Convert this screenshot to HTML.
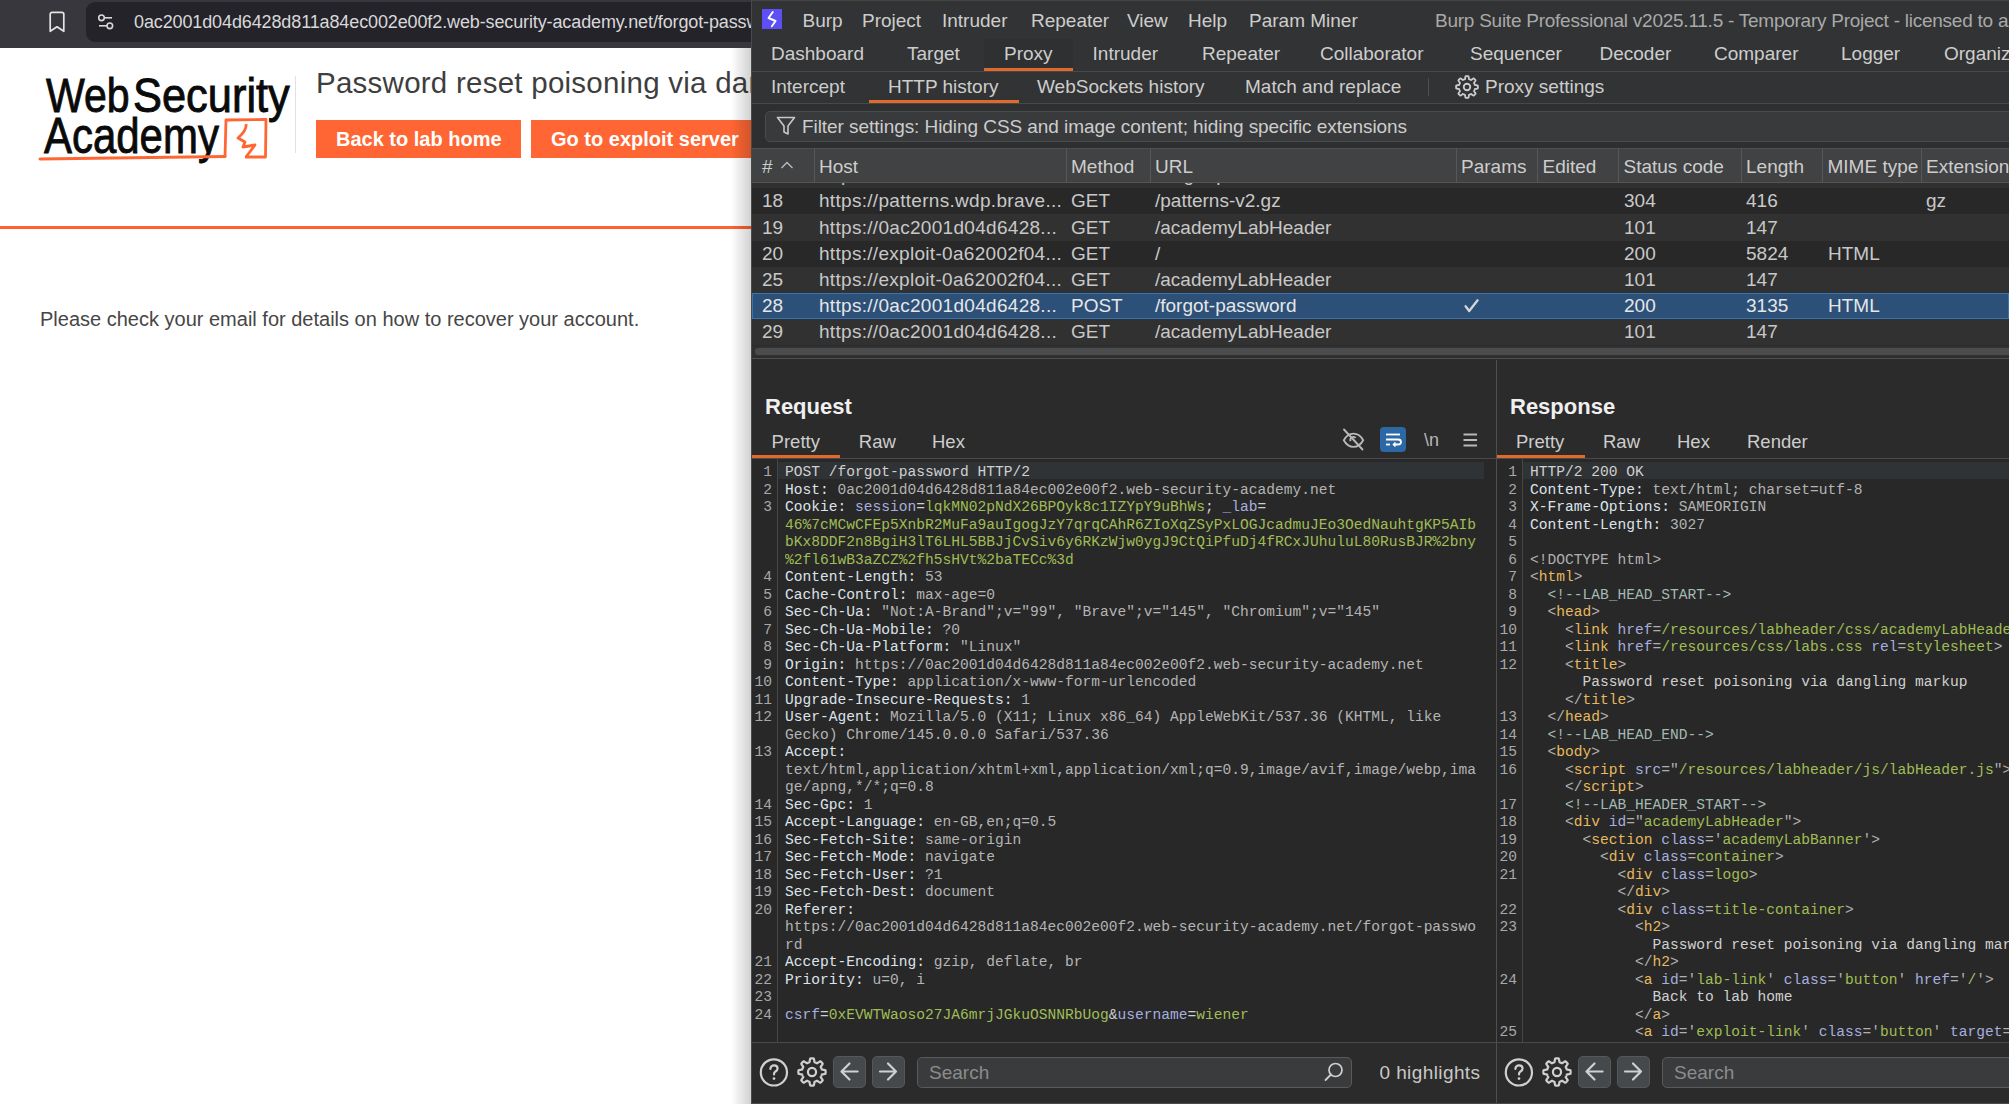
<!DOCTYPE html><html><head><meta charset="utf-8"><style>
*{margin:0;padding:0;box-sizing:border-box}
html,body{width:2009px;height:1104px;overflow:hidden;background:#fff}
body{position:relative;font-family:"Liberation Sans",sans-serif}
.t{position:absolute;white-space:pre;line-height:1.117}
.r{position:absolute}
.code{position:absolute;font-family:"Liberation Mono",monospace;font-size:14.58px;line-height:17.5px;white-space:pre;color:#b4b4b4}
.ln{position:absolute;font-family:"Liberation Mono",monospace;font-size:14.58px;line-height:17.5px;white-space:pre;color:#a8a8a8;text-align:right}
.n{color:#dde3ea}.v{color:#b4b4b4}.k{color:#a6aedf}.g{color:#a0bd55}.tg{color:#e6b95e}.c{color:#a3bab4}.p{color:#b0b0b0}.w{color:#d0d0d0}
</style></head><body>
<div class="r" style="left:0;top:0;width:751px;height:48px;background:#38373d"></div>
<div class="r" style="left:86px;top:2px;width:720px;height:40px;background:#242329;border-radius:9px"></div>
<svg class="r" style="left:47px;top:10px" width="20" height="24" viewBox="0 0 20 24"><path d="M3.2 4.3 Q3.2 2.3 5.2 2.3 H14.8 Q16.8 2.3 16.8 4.3 V21.3 L10 16.8 L3.2 21.3 Z" fill="none" stroke="#e4e4e4" stroke-width="1.7" stroke-linejoin="round"/></svg>
<svg class="r" style="left:96px;top:12px" width="20" height="20" viewBox="0 0 20 20"><circle cx="5.5" cy="5.8" r="2.8" fill="none" stroke="#d8d8d8" stroke-width="1.6"/><path d="M8.5 5.8 H16" stroke="#d8d8d8" stroke-width="1.6"/><circle cx="13.8" cy="13.8" r="2.8" fill="none" stroke="#d8d8d8" stroke-width="1.6"/><path d="M3 13.8 H11" stroke="#d8d8d8" stroke-width="1.6"/></svg>
<div class="t" style="left:134px;top:12.11px;font-size:18px;color:#d8d8da;font-weight:normal;letter-spacing:-0.12px">0ac2001d04d6428d811a84ec002e00f2.web-security-academy.net/forgot-password</div>
<div class="r" style="left:0;top:48px;width:751px;height:1056px;background:#fff;overflow:hidden">
</div>
<div class="t" style="left:45.5px;top:70.5px;font-size:49px;line-height:49px;color:#0a0a0a;transform-origin:0 0;-webkit-text-stroke:0.9px #0a0a0a;transform:scaleX(0.838)">Web</div>
<div class="t" style="left:133px;top:70.5px;font-size:49px;line-height:49px;color:#0a0a0a;transform-origin:0 0;-webkit-text-stroke:0.9px #0a0a0a;transform:scaleX(0.886)">Security</div>
<div class="t" style="left:44px;top:110.5px;font-size:49px;line-height:49px;color:#0a0a0a;transform-origin:0 0;-webkit-text-stroke:0.9px #0a0a0a;font-size:50px;line-height:50px;transform:scaleX(0.839)">Academy</div>
<svg class="r" style="left:36px;top:115px" width="236" height="50" viewBox="36 115 236 50"><path d="M40 159 Q 120 158 225 156.5" fill="none" stroke="#ff6633" stroke-width="3" stroke-linecap="round"/><path d="M225 157 L226 120 L266 119.5 L265.5 157 L245 157" fill="none" stroke="#ff6633" stroke-width="2.8" stroke-linejoin="round"/><path d="M246 124 Q247 130 238 138 L245 142 L243 147 L255 145 L246 157" fill="none" stroke="#ff6633" stroke-width="2.8" stroke-linejoin="round"/></svg>
<div class="r" style="left:295px;top:76px;width:1px;height:77px;background:#e2e2e2"></div>
<div class="t" style="left:316px;top:66.80px;font-size:29.5px;color:#3e3e3e;font-weight:normal;letter-spacing:0.25px">Password reset poisoning via dangling markup</div>
<div class="r" style="left:316px;top:120px;width:205px;height:38px;background:#ff6633"></div>
<div class="t" style="left:336px;top:127.90px;font-size:20px;color:#ffffff;font-weight:bold;">Back to lab home</div>
<div class="r" style="left:531px;top:120px;width:260px;height:38px;background:#ff6633"></div>
<div class="t" style="left:551px;top:127.90px;font-size:20px;color:#ffffff;font-weight:bold;">Go to exploit server</div>
<div class="r" style="left:0;top:225.8px;width:751px;height:3.2px;background:#ff6130"></div>
<div class="t" style="left:40px;top:307.70px;font-size:20px;color:#464646;font-weight:normal;">Please check your email for details on how to recover your account.</div>
<div class="r" style="left:731px;top:48px;width:20px;height:1056px;background:linear-gradient(to right,rgba(0,0,0,0),rgba(0,0,0,0.18))"></div>
<div class="r" style="left:751px;top:0;width:1258px;height:1104px;background:#2b2b2b;overflow:hidden">
<div class="r" style="left:0px;top:0px;width:1px;height:1104px;background:#4a4a4a;"></div>
<div class="r" style="left:1px;top:0px;width:1257px;height:103px;background:#323334;"></div>
<div class="r" style="left:1px;top:0px;width:1257px;height:1px;background:#444;"></div>
<svg class="r" style="left:11px;top:9px" width="20" height="20" viewBox="0 0 20 20"><rect width="20" height="20" fill="#5b4ff5"/><path d="M10.8 3 L6.5 9 L13.6 12 L9.8 17.3" fill="none" stroke="#fff" stroke-width="1.9" stroke-linejoin="round" stroke-linecap="round"/></svg>
<div class="t" style="left:51.5px;top:10.00px;font-size:19px;color:#cdcdcd;font-weight:normal;">Burp</div>
<div class="t" style="left:111px;top:10.00px;font-size:19px;color:#cdcdcd;font-weight:normal;">Project</div>
<div class="t" style="left:191px;top:10.00px;font-size:19px;color:#cdcdcd;font-weight:normal;">Intruder</div>
<div class="t" style="left:280px;top:10.00px;font-size:19px;color:#cdcdcd;font-weight:normal;">Repeater</div>
<div class="t" style="left:376px;top:10.00px;font-size:19px;color:#cdcdcd;font-weight:normal;">View</div>
<div class="t" style="left:437px;top:10.00px;font-size:19px;color:#cdcdcd;font-weight:normal;">Help</div>
<div class="t" style="left:498px;top:10.00px;font-size:19px;color:#cdcdcd;font-weight:normal;">Param Miner</div>
<div class="t" style="left:684px;top:10.00px;font-size:19px;color:#a9a9a9;font-weight:normal;letter-spacing:-0.25px">Burp Suite Professional v2025.11.5 - Temporary Project - licensed to a</div>
<div class="r" style="left:233px;top:39px;width:89px;height:32px;background:#2f3031;"></div>
<div class="r" style="left:233px;top:68px;width:89px;height:3px;background:#e06a2c;"></div>
<div class="r" style="left:1px;top:71px;width:1257px;height:1px;background:#474849;"></div>
<div class="t" style="left:20px;top:43.30px;font-size:19px;color:#cdcdcd;font-weight:normal;">Dashboard</div>
<div class="t" style="left:156px;top:43.30px;font-size:19px;color:#cdcdcd;font-weight:normal;">Target</div>
<div class="t" style="left:253px;top:43.30px;font-size:19px;color:#cdcdcd;font-weight:normal;">Proxy</div>
<div class="t" style="left:341.5999999999999px;top:43.30px;font-size:19px;color:#cdcdcd;font-weight:normal;">Intruder</div>
<div class="t" style="left:451px;top:43.30px;font-size:19px;color:#cdcdcd;font-weight:normal;">Repeater</div>
<div class="t" style="left:569px;top:43.30px;font-size:19px;color:#cdcdcd;font-weight:normal;">Collaborator</div>
<div class="t" style="left:719px;top:43.30px;font-size:19px;color:#cdcdcd;font-weight:normal;">Sequencer</div>
<div class="t" style="left:848.5px;top:43.30px;font-size:19px;color:#cdcdcd;font-weight:normal;">Decoder</div>
<div class="t" style="left:963px;top:43.30px;font-size:19px;color:#cdcdcd;font-weight:normal;">Comparer</div>
<div class="t" style="left:1090px;top:43.30px;font-size:19px;color:#cdcdcd;font-weight:normal;">Logger</div>
<div class="t" style="left:1193px;top:43.30px;font-size:19px;color:#cdcdcd;font-weight:normal;">Organizer</div>
<div class="r" style="left:118px;top:100px;width:150px;height:3px;background:#e06a2c;"></div>
<div class="r" style="left:1px;top:103px;width:1257px;height:1px;background:#474849;"></div>
<div class="t" style="left:20px;top:76.31px;font-size:19px;color:#cdcdcd;font-weight:normal;">Intercept</div>
<div class="t" style="left:137px;top:76.31px;font-size:19px;color:#cdcdcd;font-weight:normal;">HTTP history</div>
<div class="t" style="left:286px;top:76.31px;font-size:19px;color:#cdcdcd;font-weight:normal;">WebSockets history</div>
<div class="t" style="left:494px;top:76.31px;font-size:19px;color:#cdcdcd;font-weight:normal;">Match and replace</div>
<div class="t" style="left:734px;top:76.31px;font-size:19px;color:#cdcdcd;font-weight:normal;">Proxy settings</div>
<div class="r" style="left:677px;top:78px;width:1px;height:18px;background:#4e4e4e;"></div>
<svg class="r" style="left:701.5999999999999px;top:72.7px" width="28" height="28" viewBox="0 0 28 28"><path d="M14.00 3.10 L14.29 3.10 L14.57 3.11 L14.86 3.13 L15.14 3.16 L15.41 3.26 L15.62 3.76 L15.76 4.52 L15.84 5.32 L15.93 5.95 L16.09 6.21 L16.29 6.27 L16.49 6.33 L16.69 6.40 L16.89 6.47 L17.09 6.55 L17.28 6.63 L17.47 6.72 L17.66 6.81 L17.85 6.91 L18.03 7.01 L18.32 6.94 L18.83 6.56 L19.46 6.06 L20.09 5.61 L20.59 5.41 L20.86 5.53 L21.08 5.71 L21.29 5.90 L21.50 6.09 L21.71 6.29 L21.91 6.50 L22.10 6.71 L22.29 6.92 L22.47 7.14 L22.59 7.41 L22.39 7.91 L21.94 8.54 L21.44 9.17 L21.06 9.68 L20.99 9.97 L21.09 10.15 L21.19 10.34 L21.28 10.53 L21.37 10.72 L21.45 10.91 L21.53 11.11 L21.60 11.31 L21.67 11.51 L21.73 11.71 L21.79 11.91 L22.05 12.07 L22.68 12.16 L23.48 12.24 L24.24 12.38 L24.74 12.59 L24.84 12.86 L24.87 13.14 L24.89 13.43 L24.90 13.71 L24.90 14.00 L24.90 14.29 L24.89 14.57 L24.87 14.86 L24.84 15.14 L24.74 15.41 L24.24 15.62 L23.48 15.76 L22.68 15.84 L22.05 15.93 L21.79 16.09 L21.73 16.29 L21.67 16.49 L21.60 16.69 L21.53 16.89 L21.45 17.09 L21.37 17.28 L21.28 17.47 L21.19 17.66 L21.09 17.85 L20.99 18.03 L21.06 18.32 L21.44 18.83 L21.94 19.46 L22.39 20.09 L22.59 20.59 L22.47 20.86 L22.29 21.08 L22.10 21.29 L21.91 21.50 L21.71 21.71 L21.50 21.91 L21.29 22.10 L21.08 22.29 L20.86 22.47 L20.59 22.59 L20.09 22.39 L19.46 21.94 L18.83 21.44 L18.32 21.06 L18.03 20.99 L17.85 21.09 L17.66 21.19 L17.47 21.28 L17.28 21.37 L17.09 21.45 L16.89 21.53 L16.69 21.60 L16.49 21.67 L16.29 21.73 L16.09 21.79 L15.93 22.05 L15.84 22.68 L15.76 23.48 L15.62 24.24 L15.41 24.74 L15.14 24.84 L14.86 24.87 L14.57 24.89 L14.29 24.90 L14.00 24.90 L13.71 24.90 L13.43 24.89 L13.14 24.87 L12.86 24.84 L12.59 24.74 L12.38 24.24 L12.24 23.48 L12.16 22.68 L12.07 22.05 L11.91 21.79 L11.71 21.73 L11.51 21.67 L11.31 21.60 L11.11 21.53 L10.91 21.45 L10.72 21.37 L10.53 21.28 L10.34 21.19 L10.15 21.09 L9.97 20.99 L9.68 21.06 L9.17 21.44 L8.54 21.94 L7.91 22.39 L7.41 22.59 L7.14 22.47 L6.92 22.29 L6.71 22.10 L6.50 21.91 L6.29 21.71 L6.09 21.50 L5.90 21.29 L5.71 21.08 L5.53 20.86 L5.41 20.59 L5.61 20.09 L6.06 19.46 L6.56 18.83 L6.94 18.32 L7.01 18.03 L6.91 17.85 L6.81 17.66 L6.72 17.47 L6.63 17.28 L6.55 17.09 L6.47 16.89 L6.40 16.69 L6.33 16.49 L6.27 16.29 L6.21 16.09 L5.95 15.93 L5.32 15.84 L4.52 15.76 L3.76 15.62 L3.26 15.41 L3.16 15.14 L3.13 14.86 L3.11 14.57 L3.10 14.29 L3.10 14.00 L3.10 13.71 L3.11 13.43 L3.13 13.14 L3.16 12.86 L3.26 12.59 L3.76 12.38 L4.52 12.24 L5.32 12.16 L5.95 12.07 L6.21 11.91 L6.27 11.71 L6.33 11.51 L6.40 11.31 L6.47 11.11 L6.55 10.91 L6.63 10.72 L6.72 10.53 L6.81 10.34 L6.91 10.15 L7.01 9.97 L6.94 9.68 L6.56 9.17 L6.06 8.54 L5.61 7.91 L5.41 7.41 L5.53 7.14 L5.71 6.92 L5.90 6.71 L6.09 6.50 L6.29 6.29 L6.50 6.09 L6.71 5.90 L6.92 5.71 L7.14 5.53 L7.41 5.41 L7.91 5.61 L8.54 6.06 L9.17 6.56 L9.68 6.94 L9.97 7.01 L10.15 6.91 L10.34 6.81 L10.53 6.72 L10.72 6.63 L10.91 6.55 L11.11 6.47 L11.31 6.40 L11.51 6.33 L11.71 6.27 L11.91 6.21 L12.07 5.95 L12.16 5.32 L12.24 4.52 L12.38 3.76 L12.59 3.26 L12.86 3.16 L13.14 3.13 L13.43 3.11 L13.71 3.10 Z" fill="none" stroke="#cdcdcd" stroke-width="1.8" stroke-linejoin="round"/><circle cx="14" cy="14" r="3.27" fill="none" stroke="#cdcdcd" stroke-width="1.8"/></svg>
<div class="r" style="left:1px;top:104px;width:1257px;height:44px;background:#2e2f30;"></div>
<div class="r" style="left:14px;top:111px;width:1300px;height:31px;background:#393a3b;border:1px solid #4a4b4c;border-radius:5px"></div>
<svg class="r" style="left:25px;top:116px" width="20" height="20" viewBox="0 0 20 20"><path d="M1.5 1.5 H18.5 L12 10 V18 L8 16 V10 Z" fill="none" stroke="#c8c8c8" stroke-width="1.6" stroke-linejoin="round"/></svg>
<div class="t" style="left:51px;top:116.31px;font-size:19px;color:#cdcdcd;font-weight:normal;letter-spacing:-0.06px">Filter settings: Hiding CSS and image content; hiding specific extensions</div>
<div class="r" style="left:1px;top:148px;width:1257px;height:35px;background:#414243;"></div>
<div class="r" style="left:1px;top:182px;width:1257px;height:1px;background:#555;"></div>
<div class="r" style="left:1px;top:148px;width:1257px;height:1px;background:#4e4f50;"></div>
<div class="r" style="left:63px;top:148px;width:1px;height:34px;background:#565758;"></div>
<div class="r" style="left:315px;top:148px;width:1px;height:34px;background:#565758;"></div>
<div class="r" style="left:399px;top:148px;width:1px;height:34px;background:#565758;"></div>
<div class="r" style="left:705px;top:148px;width:1px;height:34px;background:#565758;"></div>
<div class="r" style="left:786px;top:148px;width:1px;height:34px;background:#565758;"></div>
<div class="r" style="left:867px;top:148px;width:1px;height:34px;background:#565758;"></div>
<div class="r" style="left:990px;top:148px;width:1px;height:34px;background:#565758;"></div>
<div class="r" style="left:1071px;top:148px;width:1px;height:34px;background:#565758;"></div>
<div class="r" style="left:1170px;top:148px;width:1px;height:34px;background:#565758;"></div>
<div class="t" style="left:11px;top:156.31px;font-size:19px;color:#cdcdcd;font-weight:normal;">#</div>
<svg class="r" style="left:29px;top:160px" width="14" height="10" viewBox="0 0 14 10"><path d="M1.5 8 L7 2.5 L12.5 8" fill="none" stroke="#bdbdbd" stroke-width="1.3"/></svg>
<div class="t" style="left:68px;top:156.31px;font-size:19px;color:#cdcdcd;font-weight:normal;">Host</div>
<div class="t" style="left:320px;top:156.31px;font-size:19px;color:#cdcdcd;font-weight:normal;">Method</div>
<div class="t" style="left:404px;top:156.31px;font-size:19px;color:#cdcdcd;font-weight:normal;">URL</div>
<div class="t" style="left:710px;top:156.31px;font-size:19px;color:#cdcdcd;font-weight:normal;">Params</div>
<div class="t" style="left:791.5px;top:156.31px;font-size:19px;color:#cdcdcd;font-weight:normal;">Edited</div>
<div class="t" style="left:872.5px;top:156.31px;font-size:19px;color:#cdcdcd;font-weight:normal;">Status code</div>
<div class="t" style="left:995px;top:156.31px;font-size:19px;color:#cdcdcd;font-weight:normal;">Length</div>
<div class="t" style="left:1076.5px;top:156.31px;font-size:19px;color:#cdcdcd;font-weight:normal;">MIME type</div>
<div class="t" style="left:1175px;top:156.31px;font-size:19px;color:#cdcdcd;font-weight:normal;">Extension</div>
<div class="r" style="left:1px;top:183px;width:1257px;height:5.2px;background:#303030;overflow:hidden">
<div class="t" style="left:11px;top:-18.89px;font-size:19px;color:#c8c8c8;font-weight:normal;">17</div>
<div class="t" style="left:68px;top:-18.89px;font-size:19px;color:#c8c8c8;font-weight:normal;">https://0ac2001d04d6428...</div>
<div class="t" style="left:320px;top:-18.89px;font-size:19px;color:#c8c8c8;font-weight:normal;">GET</div>
<div class="t" style="left:404px;top:-18.89px;font-size:19px;color:#c8c8c8;font-weight:normal;">/forgot-password</div>
<div class="t" style="left:873px;top:-18.89px;font-size:19px;color:#c8c8c8;font-weight:normal;">200</div>
<div class="t" style="left:995px;top:-18.89px;font-size:19px;color:#c8c8c8;font-weight:normal;">3140</div>
<div class="t" style="left:1077px;top:-18.89px;font-size:19px;color:#c8c8c8;font-weight:normal;">HTML</div>
</div>
<div class="r" style="left:1px;top:188.2px;width:1257px;height:26.2px;background:#282828;"></div>
<div class="t" style="left:11px;top:190.31px;font-size:19px;color:#c8c8c8;font-weight:normal;">18</div>
<div class="t" style="left:68px;top:190.31px;font-size:19px;color:#c8c8c8;font-weight:normal;letter-spacing:0.3px">https://patterns.wdp.brave...</div>
<div class="t" style="left:320px;top:190.31px;font-size:19px;color:#c8c8c8;font-weight:normal;">GET</div>
<div class="t" style="left:404px;top:190.31px;font-size:19px;color:#c8c8c8;font-weight:normal;">/patterns-v2.gz</div>
<div class="t" style="left:873px;top:190.31px;font-size:19px;color:#c8c8c8;font-weight:normal;">304</div>
<div class="t" style="left:995px;top:190.31px;font-size:19px;color:#c8c8c8;font-weight:normal;">416</div>
<div class="t" style="left:1175px;top:190.31px;font-size:19px;color:#c8c8c8;font-weight:normal;">gz</div>
<div class="r" style="left:1px;top:214.4px;width:1257px;height:26.2px;background:#313131;"></div>
<div class="t" style="left:11px;top:216.50px;font-size:19px;color:#c8c8c8;font-weight:normal;">19</div>
<div class="t" style="left:68px;top:216.50px;font-size:19px;color:#c8c8c8;font-weight:normal;letter-spacing:0.3px">https://0ac2001d04d6428...</div>
<div class="t" style="left:320px;top:216.50px;font-size:19px;color:#c8c8c8;font-weight:normal;">GET</div>
<div class="t" style="left:404px;top:216.50px;font-size:19px;color:#c8c8c8;font-weight:normal;">/academyLabHeader</div>
<div class="t" style="left:873px;top:216.50px;font-size:19px;color:#c8c8c8;font-weight:normal;">101</div>
<div class="t" style="left:995px;top:216.50px;font-size:19px;color:#c8c8c8;font-weight:normal;">147</div>
<div class="r" style="left:1px;top:240.6px;width:1257px;height:26.2px;background:#282828;"></div>
<div class="t" style="left:11px;top:242.70px;font-size:19px;color:#c8c8c8;font-weight:normal;">20</div>
<div class="t" style="left:68px;top:242.70px;font-size:19px;color:#c8c8c8;font-weight:normal;letter-spacing:0.3px">https://exploit-0a62002f04...</div>
<div class="t" style="left:320px;top:242.70px;font-size:19px;color:#c8c8c8;font-weight:normal;">GET</div>
<div class="t" style="left:404px;top:242.70px;font-size:19px;color:#c8c8c8;font-weight:normal;">/</div>
<div class="t" style="left:873px;top:242.70px;font-size:19px;color:#c8c8c8;font-weight:normal;">200</div>
<div class="t" style="left:995px;top:242.70px;font-size:19px;color:#c8c8c8;font-weight:normal;">5824</div>
<div class="t" style="left:1077px;top:242.70px;font-size:19px;color:#c8c8c8;font-weight:normal;">HTML</div>
<div class="r" style="left:1px;top:266.8px;width:1257px;height:26.2px;background:#313131;"></div>
<div class="t" style="left:11px;top:268.90px;font-size:19px;color:#c8c8c8;font-weight:normal;">25</div>
<div class="t" style="left:68px;top:268.90px;font-size:19px;color:#c8c8c8;font-weight:normal;letter-spacing:0.3px">https://exploit-0a62002f04...</div>
<div class="t" style="left:320px;top:268.90px;font-size:19px;color:#c8c8c8;font-weight:normal;">GET</div>
<div class="t" style="left:404px;top:268.90px;font-size:19px;color:#c8c8c8;font-weight:normal;">/academyLabHeader</div>
<div class="t" style="left:873px;top:268.90px;font-size:19px;color:#c8c8c8;font-weight:normal;">101</div>
<div class="t" style="left:995px;top:268.90px;font-size:19px;color:#c8c8c8;font-weight:normal;">147</div>
<div class="r" style="left:1px;top:293.00px;width:1257px;height:26.20px;background:#2c5078;border:1px solid #3873b2"></div>
<div class="t" style="left:11px;top:295.11px;font-size:19px;color:#e6e6e6;font-weight:normal;">28</div>
<div class="t" style="left:68px;top:295.11px;font-size:19px;color:#e6e6e6;font-weight:normal;letter-spacing:0.3px">https://0ac2001d04d6428...</div>
<div class="t" style="left:320px;top:295.11px;font-size:19px;color:#e6e6e6;font-weight:normal;">POST</div>
<div class="t" style="left:404px;top:295.11px;font-size:19px;color:#e6e6e6;font-weight:normal;">/forgot-password</div>
<svg class="r" style="left:711px;top:293.00px" width="20" height="26" viewBox="0 0 20 26"><path d="M3.6 13.2 L7.2 18 L15.6 7.3" fill="none" stroke="#d6d6d6" stroke-width="2.3" stroke-linecap="round" stroke-linejoin="round"/></svg>
<div class="t" style="left:873px;top:295.11px;font-size:19px;color:#e6e6e6;font-weight:normal;">200</div>
<div class="t" style="left:995px;top:295.11px;font-size:19px;color:#e6e6e6;font-weight:normal;">3135</div>
<div class="t" style="left:1077px;top:295.11px;font-size:19px;color:#e6e6e6;font-weight:normal;">HTML</div>
<div class="r" style="left:1px;top:319.2px;width:1257px;height:26.2px;background:#313131;"></div>
<div class="t" style="left:11px;top:321.31px;font-size:19px;color:#c8c8c8;font-weight:normal;">29</div>
<div class="t" style="left:68px;top:321.31px;font-size:19px;color:#c8c8c8;font-weight:normal;letter-spacing:0.3px">https://0ac2001d04d6428...</div>
<div class="t" style="left:320px;top:321.31px;font-size:19px;color:#c8c8c8;font-weight:normal;">GET</div>
<div class="t" style="left:404px;top:321.31px;font-size:19px;color:#c8c8c8;font-weight:normal;">/academyLabHeader</div>
<div class="t" style="left:873px;top:321.31px;font-size:19px;color:#c8c8c8;font-weight:normal;">101</div>
<div class="t" style="left:995px;top:321.31px;font-size:19px;color:#c8c8c8;font-weight:normal;">147</div>
<div class="r" style="left:1px;top:345.6px;width:1257px;height:10px;background:#313131;"></div>
<div class="r" style="left:1px;top:355.6px;width:1257px;height:2.8px;background:#2e2e2e;"></div>
<div class="r" style="left:4px;top:348px;width:1300px;height:7px;background:#4b4c4d;border-radius:4px"></div>
<div class="r" style="left:1px;top:358px;width:1257px;height:1.2px;background:#4f4f4f;"></div>
<div class="r" style="left:745px;top:360px;width:1px;height:744px;background:#4f4f4f;"></div>
<div class="t" style="left:14px;top:394.59px;font-size:22px;color:#f0f0f0;font-weight:bold;">Request</div>
<div class="t" style="left:759px;top:394.59px;font-size:22px;color:#f0f0f0;font-weight:bold;">Response</div>
<div class="t" style="left:20.600000000000023px;top:431.56px;font-size:18.5px;color:#cdcdcd;font-weight:normal;">Pretty</div>
<div class="t" style="left:107.79999999999995px;top:431.56px;font-size:18.5px;color:#cdcdcd;font-weight:normal;">Raw</div>
<div class="t" style="left:181px;top:431.56px;font-size:18.5px;color:#cdcdcd;font-weight:normal;">Hex</div>
<div class="t" style="left:765px;top:431.56px;font-size:18.5px;color:#cdcdcd;font-weight:normal;">Pretty</div>
<div class="t" style="left:852px;top:431.56px;font-size:18.5px;color:#cdcdcd;font-weight:normal;">Raw</div>
<div class="t" style="left:926px;top:431.56px;font-size:18.5px;color:#cdcdcd;font-weight:normal;">Hex</div>
<div class="t" style="left:996px;top:431.56px;font-size:18.5px;color:#cdcdcd;font-weight:normal;">Render</div>
<div class="r" style="left:1px;top:455px;width:88px;height:3px;background:#e06a2c;"></div>
<div class="r" style="left:746px;top:455px;width:88px;height:3px;background:#e06a2c;"></div>
<div class="r" style="left:1px;top:458px;width:744px;height:1px;background:#4a4a4a;"></div>
<div class="r" style="left:746px;top:458px;width:512px;height:1px;background:#4a4a4a;"></div>
<svg class="r" style="left:590px;top:427px" width="25" height="25" viewBox="0 0 25 25"><path d="M2.8 13.2 C5.5 8.2 9 6.6 12.5 6.6 C16 6.6 19.5 8.2 22.2 13.2 C19.5 18.2 16 19.8 12.5 19.8 C9 19.8 5.5 18.2 2.8 13.2 Z" fill="none" stroke="#b8b8b8" stroke-width="1.8"/><path d="M9.6 14.2 A3 3 0 0 1 14.6 11" fill="none" stroke="#b8b8b8" stroke-width="1.8"/><path d="M3 2.5 L21.5 22.5" stroke="#b8b8b8" stroke-width="1.9" stroke-linecap="round"/></svg>
<div class="r" style="left:629px;top:427px;width:26px;height:25px;background:#2c67a6;border-radius:4px"></div>
<svg class="r" style="left:629px;top:427px" width="26" height="25" viewBox="0 0 26 25"><path d="M6 7.5 H20" stroke="#fff" stroke-width="1.8"/><path d="M6 12.5 H18 Q21 12.5 21 15 Q21 17.5 18 17.5 H14" fill="none" stroke="#fff" stroke-width="1.8"/><path d="M15.5 15.5 L13.5 17.5 L15.5 19.5" fill="none" stroke="#fff" stroke-width="1.6"/><path d="M6 17.5 H10" stroke="#fff" stroke-width="1.8"/></svg>
<div class="t" style="left:673px;top:430.21px;font-size:18px;color:#b8b8b8;font-weight:normal;">\n</div>
<svg class="r" style="left:711px;top:433px" width="16" height="14" viewBox="0 0 16 14"><path d="M1.5 1.5 H15 M1.5 7 H15 M1.5 12.5 H15" stroke="#b8b8b8" stroke-width="2"/></svg>
<div class="r" style="left:1px;top:459px;width:744px;height:583px;background:#282828;"></div>
<div class="r" style="left:746px;top:459px;width:512px;height:583px;background:#282828;"></div>
<div class="r" style="left:26px;top:459px;width:1px;height:583px;background:#464646;"></div>
<div class="r" style="left:771px;top:459px;width:1px;height:583px;background:#464646;"></div>
<div class="r" style="left:27px;top:462px;width:706px;height:17.2px;background:#303336;"></div>
<div class="r" style="left:772px;top:462px;width:486px;height:17.2px;background:#303336;"></div>
<div class="r" style="left:1px;top:1042px;width:744px;height:1px;background:#4a4a4a;"></div>
<div class="r" style="left:746px;top:1042px;width:512px;height:1px;background:#4a4a4a;"></div>
<div class="ln" style="left:-39px;top:464px;width:60px">1
2
3



4
5
6
7
8
9
10
11
12

13


14
15
16
17
18
19
20


21
22
23
24</div>
<div class="code" style="left:34px;top:464px;width:700px;height:578px;overflow:hidden"><span class="w">POST /forgot-password HTTP/2</span>
<span class="n">Host:</span><span class="v"> 0ac2001d04d6428d811a84ec002e00f2.web-security-academy.net</span>
<span class="n">Cookie:</span><span class="v"> </span><span class="k">session</span><span class="w">=</span><span class="g">lqkMN02pNdX26BPOyk8c1IZYpY9uBhWs</span><span class="w">;</span><span class="v"> </span><span class="k">_lab</span><span class="w">=</span>
<span class="g">46%7cMCwCFEp5XnbR2MuFa9auIgogJzY7qrqCAhR6ZIoXqZSyPxLOGJcadmuJEo3OedNauhtgKP5AIb</span>
<span class="g">bKx8DDF2n8BgiH3lT6LHL5BBJjCvSiv6y6RKzWjw0ygJ9CtQiPfuDj4fRCxJUhuluL80RusBJR%2bny</span>
<span class="g">%2fl61wB3aZCZ%2fh5sHVt%2baTECc%3d</span>
<span class="n">Content-Length:</span><span class="v"> 53</span>
<span class="n">Cache-Control:</span><span class="v"> max-age=0</span>
<span class="n">Sec-Ch-Ua:</span><span class="v"> &quot;Not:A-Brand&quot;;v=&quot;99&quot;, &quot;Brave&quot;;v=&quot;145&quot;, &quot;Chromium&quot;;v=&quot;145&quot;</span>
<span class="n">Sec-Ch-Ua-Mobile:</span><span class="v"> ?0</span>
<span class="n">Sec-Ch-Ua-Platform:</span><span class="v"> &quot;Linux&quot;</span>
<span class="n">Origin:</span><span class="v"> https://0ac2001d04d6428d811a84ec002e00f2.web-security-academy.net</span>
<span class="n">Content-Type:</span><span class="v"> application/x-www-form-urlencoded</span>
<span class="n">Upgrade-Insecure-Requests:</span><span class="v"> 1</span>
<span class="n">User-Agent:</span><span class="v"> Mozilla/5.0 (X11; Linux x86_64) AppleWebKit/537.36 (KHTML, like</span>
<span class="v">Gecko) Chrome/145.0.0.0 Safari/537.36</span>
<span class="n">Accept:</span>
<span class="v">text/html,application/xhtml+xml,application/xml;q=0.9,image/avif,image/webp,ima</span>
<span class="v">ge/apng,*/*;q=0.8</span>
<span class="n">Sec-Gpc:</span><span class="v"> 1</span>
<span class="n">Accept-Language:</span><span class="v"> en-GB,en;q=0.5</span>
<span class="n">Sec-Fetch-Site:</span><span class="v"> same-origin</span>
<span class="n">Sec-Fetch-Mode:</span><span class="v"> navigate</span>
<span class="n">Sec-Fetch-User:</span><span class="v"> ?1</span>
<span class="n">Sec-Fetch-Dest:</span><span class="v"> document</span>
<span class="n">Referer:</span>
<span class="v">https://0ac2001d04d6428d811a84ec002e00f2.web-security-academy.net/forgot-passwo</span>
<span class="v">rd</span>
<span class="n">Accept-Encoding:</span><span class="v"> gzip, deflate, br</span>
<span class="n">Priority:</span><span class="v"> u=0, i</span>

<span class="k">csrf</span><span class="w">=</span><span class="g">0xEVWTWaoso27JA6mrjJGkuOSNNRbUog</span><span class="w">&amp;</span><span class="k">username</span><span class="w">=</span><span class="g">wiener</span></div>
<div class="ln" style="left:706px;top:464px;width:60px">1
2
3
4
5
6
7
8
9
10
11
12


13
14
15
16

17
18
19
20
21

22
23


24


25</div>
<div class="code" style="left:779px;top:464px;width:479px;height:578px;overflow:hidden"><span class="w">HTTP/2 200 OK</span>
<span class="n">Content-Type:</span><span class="v"> text/html; charset=utf-8</span>
<span class="n">X-Frame-Options:</span><span class="v"> SAMEORIGIN</span>
<span class="n">Content-Length:</span><span class="v"> 3027</span>

<span class="p">&lt;!DOCTYPE html&gt;</span>
<span class="v"></span><span class="p">&lt;</span><span class="tg">html</span><span class="p">&gt;</span>
<span class="v">  </span><span class="c">&lt;!--LAB_HEAD_START--&gt;</span>
<span class="v">  </span><span class="p">&lt;</span><span class="tg">head</span><span class="p">&gt;</span>
<span class="v">    </span><span class="p">&lt;</span><span class="tg">link</span><span class="v"> </span><span class="k">href</span><span class="p">=</span><span class="g">/resources/labheader/css/academyLabHeader.css</span><span class="v"> </span><span class="k">rel</span><span class="p">=</span><span class="g">stylesheet</span><span class="p">&gt;</span>
<span class="v">    </span><span class="p">&lt;</span><span class="tg">link</span><span class="v"> </span><span class="k">href</span><span class="p">=</span><span class="g">/resources/css/labs.css</span><span class="v"> </span><span class="k">rel</span><span class="p">=</span><span class="g">stylesheet</span><span class="p">&gt;</span>
<span class="v">    </span><span class="p">&lt;</span><span class="tg">title</span><span class="p">&gt;</span>
<span class="w">      Password reset poisoning via dangling markup</span>
<span class="v">    </span><span class="p">&lt;/</span><span class="tg">title</span><span class="p">&gt;</span>
<span class="v">  </span><span class="p">&lt;/</span><span class="tg">head</span><span class="p">&gt;</span>
<span class="v">  </span><span class="c">&lt;!--LAB_HEAD_END--&gt;</span>
<span class="v">  </span><span class="p">&lt;</span><span class="tg">body</span><span class="p">&gt;</span>
<span class="v">    </span><span class="p">&lt;</span><span class="tg">script</span><span class="v"> </span><span class="k">src</span><span class="p">=</span><span class="p">&quot;</span><span class="g">/resources/labheader/js/labHeader.js</span><span class="p">&quot;</span><span class="p">&gt;</span>
<span class="v">    </span><span class="p">&lt;/</span><span class="tg">script</span><span class="p">&gt;</span>
<span class="v">    </span><span class="c">&lt;!--LAB_HEADER_START--&gt;</span>
<span class="v">    </span><span class="p">&lt;</span><span class="tg">div</span><span class="v"> </span><span class="k">id</span><span class="p">=</span><span class="p">&quot;</span><span class="g">academyLabHeader</span><span class="p">&quot;</span><span class="p">&gt;</span>
<span class="v">      </span><span class="p">&lt;</span><span class="tg">section</span><span class="v"> </span><span class="k">class</span><span class="p">=</span><span class="p">&#x27;</span><span class="g">academyLabBanner</span><span class="p">&#x27;</span><span class="p">&gt;</span>
<span class="v">        </span><span class="p">&lt;</span><span class="tg">div</span><span class="v"> </span><span class="k">class</span><span class="p">=</span><span class="g">container</span><span class="p">&gt;</span>
<span class="v">          </span><span class="p">&lt;</span><span class="tg">div</span><span class="v"> </span><span class="k">class</span><span class="p">=</span><span class="g">logo</span><span class="p">&gt;</span>
<span class="v">          </span><span class="p">&lt;/</span><span class="tg">div</span><span class="p">&gt;</span>
<span class="v">          </span><span class="p">&lt;</span><span class="tg">div</span><span class="v"> </span><span class="k">class</span><span class="p">=</span><span class="g">title-container</span><span class="p">&gt;</span>
<span class="v">            </span><span class="p">&lt;</span><span class="tg">h2</span><span class="p">&gt;</span>
<span class="w">              Password reset poisoning via dangling markup</span>
<span class="v">            </span><span class="p">&lt;/</span><span class="tg">h2</span><span class="p">&gt;</span>
<span class="v">            </span><span class="p">&lt;</span><span class="tg">a</span><span class="v"> </span><span class="k">id</span><span class="p">=</span><span class="p">&#x27;</span><span class="g">lab-link</span><span class="p">&#x27;</span><span class="v"> </span><span class="k">class</span><span class="p">=</span><span class="p">&#x27;</span><span class="g">button</span><span class="p">&#x27;</span><span class="v"> </span><span class="k">href</span><span class="p">=</span><span class="p">&#x27;</span><span class="g">/</span><span class="p">&#x27;</span><span class="p">&gt;</span>
<span class="w">              Back to lab home</span>
<span class="v">            </span><span class="p">&lt;/</span><span class="tg">a</span><span class="p">&gt;</span>
<span class="v">            </span><span class="p">&lt;</span><span class="tg">a</span><span class="v"> </span><span class="k">id</span><span class="p">=</span><span class="p">&#x27;</span><span class="g">exploit-link</span><span class="p">&#x27;</span><span class="v"> </span><span class="k">class</span><span class="p">=</span><span class="p">&#x27;</span><span class="g">button</span><span class="p">&#x27;</span><span class="v"> </span><span class="k">target</span><span class="p">=</span><span class="p">&#x27;</span><span class="g">_blank</span><span class="p">&#x27;</span><span class="v"> </span><span class="k">href</span><span class="p">=</span><span class="p">&#x27;</span><span class="g">https://exploit-0a62002f04.exploit-server.net</span><span class="p">&#x27;</span><span class="p">&gt;</span></div>
<div class="r" style="left:1px;top:1043px;width:744px;height:60px;background:#2b2b2b;"></div>
<div class="r" style="left:746px;top:1043px;width:512px;height:60px;background:#2b2b2b;"></div>
<svg class="r" style="left:8px;top:1057px" width="30" height="30" viewBox="0 0 30 30"><circle cx="14.9" cy="15.4" r="13.1" fill="none" stroke="#d0d0d0" stroke-width="2.2"/><path d="M11.4 11.9 C11.4 9.6 13.1 8.3 15 8.3 C17 8.3 18.6 9.6 18.6 11.6 C18.6 13.4 17.1 14.2 16.1 14.8 C15.3 15.3 15 15.9 15 17.4" fill="none" stroke="#d0d0d0" stroke-width="2.2" stroke-linecap="round"/><circle cx="15" cy="21.6" r="1.35" fill="#d0d0d0"/></svg>
<svg class="r" style="left:44.5px;top:1056px" width="32" height="32" viewBox="0 0 32 32"><path d="M16.00 2.40 L16.36 2.40 L16.71 2.42 L17.07 2.44 L17.42 2.47 L17.76 2.60 L18.02 3.23 L18.19 4.17 L18.30 5.17 L18.41 5.96 L18.60 6.28 L18.86 6.35 L19.11 6.43 L19.36 6.51 L19.61 6.60 L19.85 6.70 L20.09 6.81 L20.33 6.92 L20.57 7.03 L20.80 7.16 L21.03 7.28 L21.40 7.20 L22.03 6.72 L22.81 6.09 L23.60 5.54 L24.23 5.28 L24.56 5.43 L24.83 5.66 L25.10 5.89 L25.36 6.13 L25.62 6.38 L25.87 6.64 L26.11 6.90 L26.34 7.17 L26.57 7.44 L26.72 7.77 L26.46 8.40 L25.91 9.19 L25.28 9.97 L24.80 10.60 L24.72 10.97 L24.84 11.20 L24.97 11.43 L25.08 11.67 L25.19 11.91 L25.30 12.15 L25.40 12.39 L25.49 12.64 L25.57 12.89 L25.65 13.14 L25.72 13.40 L26.04 13.59 L26.83 13.70 L27.83 13.81 L28.77 13.98 L29.40 14.24 L29.53 14.58 L29.56 14.93 L29.58 15.29 L29.60 15.64 L29.60 16.00 L29.60 16.36 L29.58 16.71 L29.56 17.07 L29.53 17.42 L29.40 17.76 L28.77 18.02 L27.83 18.19 L26.83 18.30 L26.04 18.41 L25.72 18.60 L25.65 18.86 L25.57 19.11 L25.49 19.36 L25.40 19.61 L25.30 19.85 L25.19 20.09 L25.08 20.33 L24.97 20.57 L24.84 20.80 L24.72 21.03 L24.80 21.40 L25.28 22.03 L25.91 22.81 L26.46 23.60 L26.72 24.23 L26.57 24.56 L26.34 24.83 L26.11 25.10 L25.87 25.36 L25.62 25.62 L25.36 25.87 L25.10 26.11 L24.83 26.34 L24.56 26.57 L24.23 26.72 L23.60 26.46 L22.81 25.91 L22.03 25.28 L21.40 24.80 L21.03 24.72 L20.80 24.84 L20.57 24.97 L20.33 25.08 L20.09 25.19 L19.85 25.30 L19.61 25.40 L19.36 25.49 L19.11 25.57 L18.86 25.65 L18.60 25.72 L18.41 26.04 L18.30 26.83 L18.19 27.83 L18.02 28.77 L17.76 29.40 L17.42 29.53 L17.07 29.56 L16.71 29.58 L16.36 29.60 L16.00 29.60 L15.64 29.60 L15.29 29.58 L14.93 29.56 L14.58 29.53 L14.24 29.40 L13.98 28.77 L13.81 27.83 L13.70 26.83 L13.59 26.04 L13.40 25.72 L13.14 25.65 L12.89 25.57 L12.64 25.49 L12.39 25.40 L12.15 25.30 L11.91 25.19 L11.67 25.08 L11.43 24.97 L11.20 24.84 L10.97 24.72 L10.60 24.80 L9.97 25.28 L9.19 25.91 L8.40 26.46 L7.77 26.72 L7.44 26.57 L7.17 26.34 L6.90 26.11 L6.64 25.87 L6.38 25.62 L6.13 25.36 L5.89 25.10 L5.66 24.83 L5.43 24.56 L5.28 24.23 L5.54 23.60 L6.09 22.81 L6.72 22.03 L7.20 21.40 L7.28 21.03 L7.16 20.80 L7.03 20.57 L6.92 20.33 L6.81 20.09 L6.70 19.85 L6.60 19.61 L6.51 19.36 L6.43 19.11 L6.35 18.86 L6.28 18.60 L5.96 18.41 L5.17 18.30 L4.17 18.19 L3.23 18.02 L2.60 17.76 L2.47 17.42 L2.44 17.07 L2.42 16.71 L2.40 16.36 L2.40 16.00 L2.40 15.64 L2.42 15.29 L2.44 14.93 L2.47 14.58 L2.60 14.24 L3.23 13.98 L4.17 13.81 L5.17 13.70 L5.96 13.59 L6.28 13.40 L6.35 13.14 L6.43 12.89 L6.51 12.64 L6.60 12.39 L6.70 12.15 L6.81 11.91 L6.92 11.67 L7.03 11.43 L7.16 11.20 L7.28 10.97 L7.20 10.60 L6.72 9.97 L6.09 9.19 L5.54 8.40 L5.28 7.77 L5.43 7.44 L5.66 7.17 L5.89 6.90 L6.13 6.64 L6.38 6.38 L6.64 6.13 L6.90 5.89 L7.17 5.66 L7.44 5.43 L7.77 5.28 L8.40 5.54 L9.19 6.09 L9.97 6.72 L10.60 7.20 L10.97 7.28 L11.20 7.16 L11.43 7.03 L11.67 6.92 L11.91 6.81 L12.15 6.70 L12.39 6.60 L12.64 6.51 L12.89 6.43 L13.14 6.35 L13.40 6.28 L13.59 5.96 L13.70 5.17 L13.81 4.17 L13.98 3.23 L14.24 2.60 L14.58 2.47 L14.93 2.44 L15.29 2.42 L15.64 2.40 Z" fill="none" stroke="#d0d0d0" stroke-width="2.2" stroke-linejoin="round"/><circle cx="16" cy="16" r="4.08" fill="none" stroke="#d0d0d0" stroke-width="2.2"/></svg>
<div class="r" style="left:82px;top:1055.5px;width:33px;height:32.5px;background:#46494c;border:1px solid #54585b;border-radius:5px"></div><svg class="r" style="left:82px;top:1055.5px" width="33" height="32" viewBox="0 0 33 32"><path d="M24.6 15.5 H9 M16.5 7.5 L8.5 15.5 L16.5 23.5" fill="none" stroke="#d0d0d0" stroke-width="2.2" stroke-linecap="round" stroke-linejoin="round"/></svg>
<div class="r" style="left:121px;top:1055.5px;width:33px;height:32.5px;background:#46494c;border:1px solid #54585b;border-radius:5px"></div><svg class="r" style="left:121px;top:1055.5px" width="33" height="32" viewBox="0 0 33 32"><path d="M8 15.5 H23.6 M16 7.5 L24 15.5 L16 23.5" fill="none" stroke="#d0d0d0" stroke-width="2.2" stroke-linecap="round" stroke-linejoin="round"/></svg>
<div class="r" style="left:166px;top:1057px;width:435px;height:31px;background:#3a3b3c;border:1px solid #5a5a5a;border-radius:5px"></div>
<div class="t" style="left:178px;top:1062.31px;font-size:19px;color:#8c8c8c;font-weight:normal;">Search</div>
<svg class="r" style="left:753px;top:1057px" width="30" height="30" viewBox="0 0 30 30"><circle cx="14.9" cy="15.4" r="13.1" fill="none" stroke="#d0d0d0" stroke-width="2.2"/><path d="M11.4 11.9 C11.4 9.6 13.1 8.3 15 8.3 C17 8.3 18.6 9.6 18.6 11.6 C18.6 13.4 17.1 14.2 16.1 14.8 C15.3 15.3 15 15.9 15 17.4" fill="none" stroke="#d0d0d0" stroke-width="2.2" stroke-linecap="round"/><circle cx="15" cy="21.6" r="1.35" fill="#d0d0d0"/></svg>
<svg class="r" style="left:789.5px;top:1056px" width="32" height="32" viewBox="0 0 32 32"><path d="M16.00 2.40 L16.36 2.40 L16.71 2.42 L17.07 2.44 L17.42 2.47 L17.76 2.60 L18.02 3.23 L18.19 4.17 L18.30 5.17 L18.41 5.96 L18.60 6.28 L18.86 6.35 L19.11 6.43 L19.36 6.51 L19.61 6.60 L19.85 6.70 L20.09 6.81 L20.33 6.92 L20.57 7.03 L20.80 7.16 L21.03 7.28 L21.40 7.20 L22.03 6.72 L22.81 6.09 L23.60 5.54 L24.23 5.28 L24.56 5.43 L24.83 5.66 L25.10 5.89 L25.36 6.13 L25.62 6.38 L25.87 6.64 L26.11 6.90 L26.34 7.17 L26.57 7.44 L26.72 7.77 L26.46 8.40 L25.91 9.19 L25.28 9.97 L24.80 10.60 L24.72 10.97 L24.84 11.20 L24.97 11.43 L25.08 11.67 L25.19 11.91 L25.30 12.15 L25.40 12.39 L25.49 12.64 L25.57 12.89 L25.65 13.14 L25.72 13.40 L26.04 13.59 L26.83 13.70 L27.83 13.81 L28.77 13.98 L29.40 14.24 L29.53 14.58 L29.56 14.93 L29.58 15.29 L29.60 15.64 L29.60 16.00 L29.60 16.36 L29.58 16.71 L29.56 17.07 L29.53 17.42 L29.40 17.76 L28.77 18.02 L27.83 18.19 L26.83 18.30 L26.04 18.41 L25.72 18.60 L25.65 18.86 L25.57 19.11 L25.49 19.36 L25.40 19.61 L25.30 19.85 L25.19 20.09 L25.08 20.33 L24.97 20.57 L24.84 20.80 L24.72 21.03 L24.80 21.40 L25.28 22.03 L25.91 22.81 L26.46 23.60 L26.72 24.23 L26.57 24.56 L26.34 24.83 L26.11 25.10 L25.87 25.36 L25.62 25.62 L25.36 25.87 L25.10 26.11 L24.83 26.34 L24.56 26.57 L24.23 26.72 L23.60 26.46 L22.81 25.91 L22.03 25.28 L21.40 24.80 L21.03 24.72 L20.80 24.84 L20.57 24.97 L20.33 25.08 L20.09 25.19 L19.85 25.30 L19.61 25.40 L19.36 25.49 L19.11 25.57 L18.86 25.65 L18.60 25.72 L18.41 26.04 L18.30 26.83 L18.19 27.83 L18.02 28.77 L17.76 29.40 L17.42 29.53 L17.07 29.56 L16.71 29.58 L16.36 29.60 L16.00 29.60 L15.64 29.60 L15.29 29.58 L14.93 29.56 L14.58 29.53 L14.24 29.40 L13.98 28.77 L13.81 27.83 L13.70 26.83 L13.59 26.04 L13.40 25.72 L13.14 25.65 L12.89 25.57 L12.64 25.49 L12.39 25.40 L12.15 25.30 L11.91 25.19 L11.67 25.08 L11.43 24.97 L11.20 24.84 L10.97 24.72 L10.60 24.80 L9.97 25.28 L9.19 25.91 L8.40 26.46 L7.77 26.72 L7.44 26.57 L7.17 26.34 L6.90 26.11 L6.64 25.87 L6.38 25.62 L6.13 25.36 L5.89 25.10 L5.66 24.83 L5.43 24.56 L5.28 24.23 L5.54 23.60 L6.09 22.81 L6.72 22.03 L7.20 21.40 L7.28 21.03 L7.16 20.80 L7.03 20.57 L6.92 20.33 L6.81 20.09 L6.70 19.85 L6.60 19.61 L6.51 19.36 L6.43 19.11 L6.35 18.86 L6.28 18.60 L5.96 18.41 L5.17 18.30 L4.17 18.19 L3.23 18.02 L2.60 17.76 L2.47 17.42 L2.44 17.07 L2.42 16.71 L2.40 16.36 L2.40 16.00 L2.40 15.64 L2.42 15.29 L2.44 14.93 L2.47 14.58 L2.60 14.24 L3.23 13.98 L4.17 13.81 L5.17 13.70 L5.96 13.59 L6.28 13.40 L6.35 13.14 L6.43 12.89 L6.51 12.64 L6.60 12.39 L6.70 12.15 L6.81 11.91 L6.92 11.67 L7.03 11.43 L7.16 11.20 L7.28 10.97 L7.20 10.60 L6.72 9.97 L6.09 9.19 L5.54 8.40 L5.28 7.77 L5.43 7.44 L5.66 7.17 L5.89 6.90 L6.13 6.64 L6.38 6.38 L6.64 6.13 L6.90 5.89 L7.17 5.66 L7.44 5.43 L7.77 5.28 L8.40 5.54 L9.19 6.09 L9.97 6.72 L10.60 7.20 L10.97 7.28 L11.20 7.16 L11.43 7.03 L11.67 6.92 L11.91 6.81 L12.15 6.70 L12.39 6.60 L12.64 6.51 L12.89 6.43 L13.14 6.35 L13.40 6.28 L13.59 5.96 L13.70 5.17 L13.81 4.17 L13.98 3.23 L14.24 2.60 L14.58 2.47 L14.93 2.44 L15.29 2.42 L15.64 2.40 Z" fill="none" stroke="#d0d0d0" stroke-width="2.2" stroke-linejoin="round"/><circle cx="16" cy="16" r="4.08" fill="none" stroke="#d0d0d0" stroke-width="2.2"/></svg>
<div class="r" style="left:827px;top:1055.5px;width:33px;height:32.5px;background:#46494c;border:1px solid #54585b;border-radius:5px"></div><svg class="r" style="left:827px;top:1055.5px" width="33" height="32" viewBox="0 0 33 32"><path d="M24.6 15.5 H9 M16.5 7.5 L8.5 15.5 L16.5 23.5" fill="none" stroke="#d0d0d0" stroke-width="2.2" stroke-linecap="round" stroke-linejoin="round"/></svg>
<div class="r" style="left:866px;top:1055.5px;width:33px;height:32.5px;background:#46494c;border:1px solid #54585b;border-radius:5px"></div><svg class="r" style="left:866px;top:1055.5px" width="33" height="32" viewBox="0 0 33 32"><path d="M8 15.5 H23.6 M16 7.5 L24 15.5 L16 23.5" fill="none" stroke="#d0d0d0" stroke-width="2.2" stroke-linecap="round" stroke-linejoin="round"/></svg>
<div class="r" style="left:911px;top:1057px;width:401px;height:31px;background:#3a3b3c;border:1px solid #5a5a5a;border-radius:5px"></div>
<div class="t" style="left:923px;top:1062.31px;font-size:19px;color:#8c8c8c;font-weight:normal;">Search</div>
<svg class="r" style="left:571px;top:1060px" width="24" height="24" viewBox="0 0 24 24"><circle cx="13.5" cy="10" r="6.5" fill="none" stroke="#cfcfcf" stroke-width="1.7"/><path d="M9 14.5 L3.5 20" stroke="#cfcfcf" stroke-width="1.8" stroke-linecap="round"/></svg>
<div class="t" style="left:628.5px;top:1062.31px;font-size:19px;color:#c8c8c8;font-weight:normal;letter-spacing:0.4px">0 highlights</div>
<div class="r" style="left:1px;top:1103px;width:1257px;height:1px;background:#4a4a4a;"></div>
</div>
</body></html>
